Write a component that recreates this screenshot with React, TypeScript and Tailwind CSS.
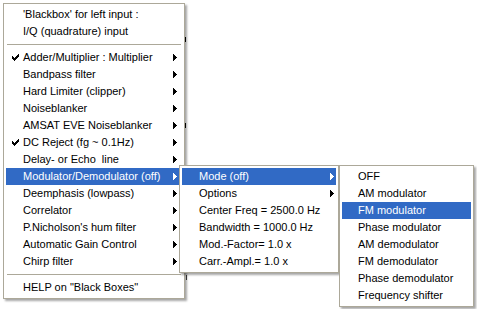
import React from "react";

type Item = { label?: string; check?: boolean; arrow?: boolean; sep?: boolean; hl?: boolean };

const mainItems: Item[] = [
  { label: "'Blackbox' for left input :" },
  { label: "I/Q (quadrature) input" },
  { sep: true },
  { label: "Adder/Multiplier : Multiplier", check: true, arrow: true },
  { label: "Bandpass filter", arrow: true },
  { label: "Hard Limiter (clipper)", arrow: true },
  { label: "Noiseblanker", arrow: true },
  { label: "AMSAT EVE Noiseblanker", arrow: true },
  { label: "DC Reject (fg ~ 0.1Hz)", check: true, arrow: true },
  { label: "Delay- or Echo  line", arrow: true },
  { label: "Modulator/Demodulator (off)", arrow: true, hl: true },
  { label: "Deemphasis (lowpass)", arrow: true },
  { label: "Correlator", arrow: true },
  { label: "P.Nicholson's hum filter", arrow: true },
  { label: "Automatic Gain Control", arrow: true },
  { label: "Chirp filter", arrow: true },
  { sep: true },
  { label: 'HELP on "Black Boxes"' },
];

const sub1Items: Item[] = [
  { label: "Mode (off)", arrow: true, hl: true },
  { label: "Options", arrow: true },
  { label: "Center Freq = 2500.0 Hz" },
  { label: "Bandwidth = 1000.0 Hz" },
  { label: "Mod.-Factor= 1.0 x" },
  { label: "Carr.-Ampl.= 1.0 x" },
];

const sub2Items: Item[] = [
  { label: "OFF" },
  { label: "AM modulator" },
  { label: "FM modulator", hl: true },
  { label: "Phase modulator" },
  { label: "AM demodulator" },
  { label: "FM demodulator" },
  { label: "Phase demodulator" },
  { label: "Frequency shifter" },
];

function Arrow({ white }: { white?: boolean }) {
  const c = white ? "#ffffff" : "#000000";
  return (
    <svg width="4" height="7" viewBox="0 0 4 7" shapeRendering="crispEdges" className="block">
      <rect x="0" y="0" width="1" height="7" fill={c} />
      <rect x="1" y="1" width="1" height="5" fill={c} />
      <rect x="2" y="2" width="1" height="3" fill={c} />
      <rect x="3" y="3" width="1" height="1" fill={c} />
    </svg>
  );
}

function Check() {
  const px: [number, number][] = [
    [6, 0],
    [5, 1], [6, 1],
    [0, 2], [4, 2], [5, 2], [6, 2],
    [0, 3], [1, 3], [3, 3], [4, 3], [5, 3],
    [0, 4], [1, 4], [2, 4], [3, 4], [4, 4],
    [1, 5], [2, 5], [3, 5],
    [2, 6],
  ];
  return (
    <svg width="7" height="7" viewBox="0 0 7 7" shapeRendering="crispEdges" className="block">
      {px.map(([x, y], i) => (
        <rect key={i} x={x} y={y} width="1" height="1" fill="#000" />
      ))}
    </svg>
  );
}

function MenuRows({ items, textPad, arrowPad }: { items: Item[]; textPad: string; arrowPad: string }) {
  return (
    <>
      {items.map((it, i) =>
        it.sep ? (
          <div key={i} className="h-[9px] flex items-center px-px">
            <div className="h-px w-full bg-[#ACA899]" />
          </div>
        ) : (
          <div
            key={i}
            className={
              it.hl
                ? "h-[17px] flex items-center bg-[#316AC5] text-white"
                : "h-[17px] flex items-center text-black"
            }
          >
            <div className={`${textPad} flex items-center justify-center shrink-0 h-full`}>
              {it.check ? <div className="ml-[1px] mt-[-1px]"><Check /></div> : null}
            </div>
            <div className="flex-1 whitespace-pre leading-[17px]">{it.label}</div>
            {it.arrow ? (
              <div className={`${arrowPad} shrink-0`}>
                <Arrow white={it.hl} />
              </div>
            ) : null}
          </div>
        )
      )}
    </>
  );
}

export default function App() {
  return (
    <div className="relative w-[477px] h-[309px] bg-white overflow-hidden font-['Liberation_Sans',Arial,sans-serif] text-[11px]">
      {/* background window ticks peeking past the shadow */}
      <div className="absolute left-[185px] top-[37px] w-px h-[5px] bg-black" />
      <div className="absolute left-[185px] top-[123px] w-px h-[5px] bg-black" />
      <div className="absolute left-[186px] top-[275px] w-px h-[5px] bg-[#333]" />

      {/* main menu */}
      <div className="pt-[3px] pl-[3px]">
        <div className="w-[182px] border border-[#ACA899] bg-white p-[2px] shadow-[2px_2px_2px_rgba(0,0,0,0.35)]">
          <MenuRows items={mainItems} textPad="w-[17px]" arrowPad="mr-[5px]" />
        </div>
      </div>

      {/* submenu 1 */}
      <div className="absolute left-[179px] top-[165px] w-[160px] border border-[#ACA899] bg-white p-[2px] shadow-[2px_2px_2px_rgba(0,0,0,0.35)]">
        <MenuRows items={sub1Items} textPad="w-[17px]" arrowPad="mr-[2px]" />
      </div>

      {/* submenu 2 */}
      <div className="absolute left-[339px] top-[165px] w-[135px] border border-[#ACA899] bg-white p-[2px] shadow-[2px_2px_2px_rgba(0,0,0,0.35)]">
        <MenuRows items={sub2Items} textPad="w-[16px]" arrowPad="mr-[5px]" />
      </div>
    </div>
  );
}
